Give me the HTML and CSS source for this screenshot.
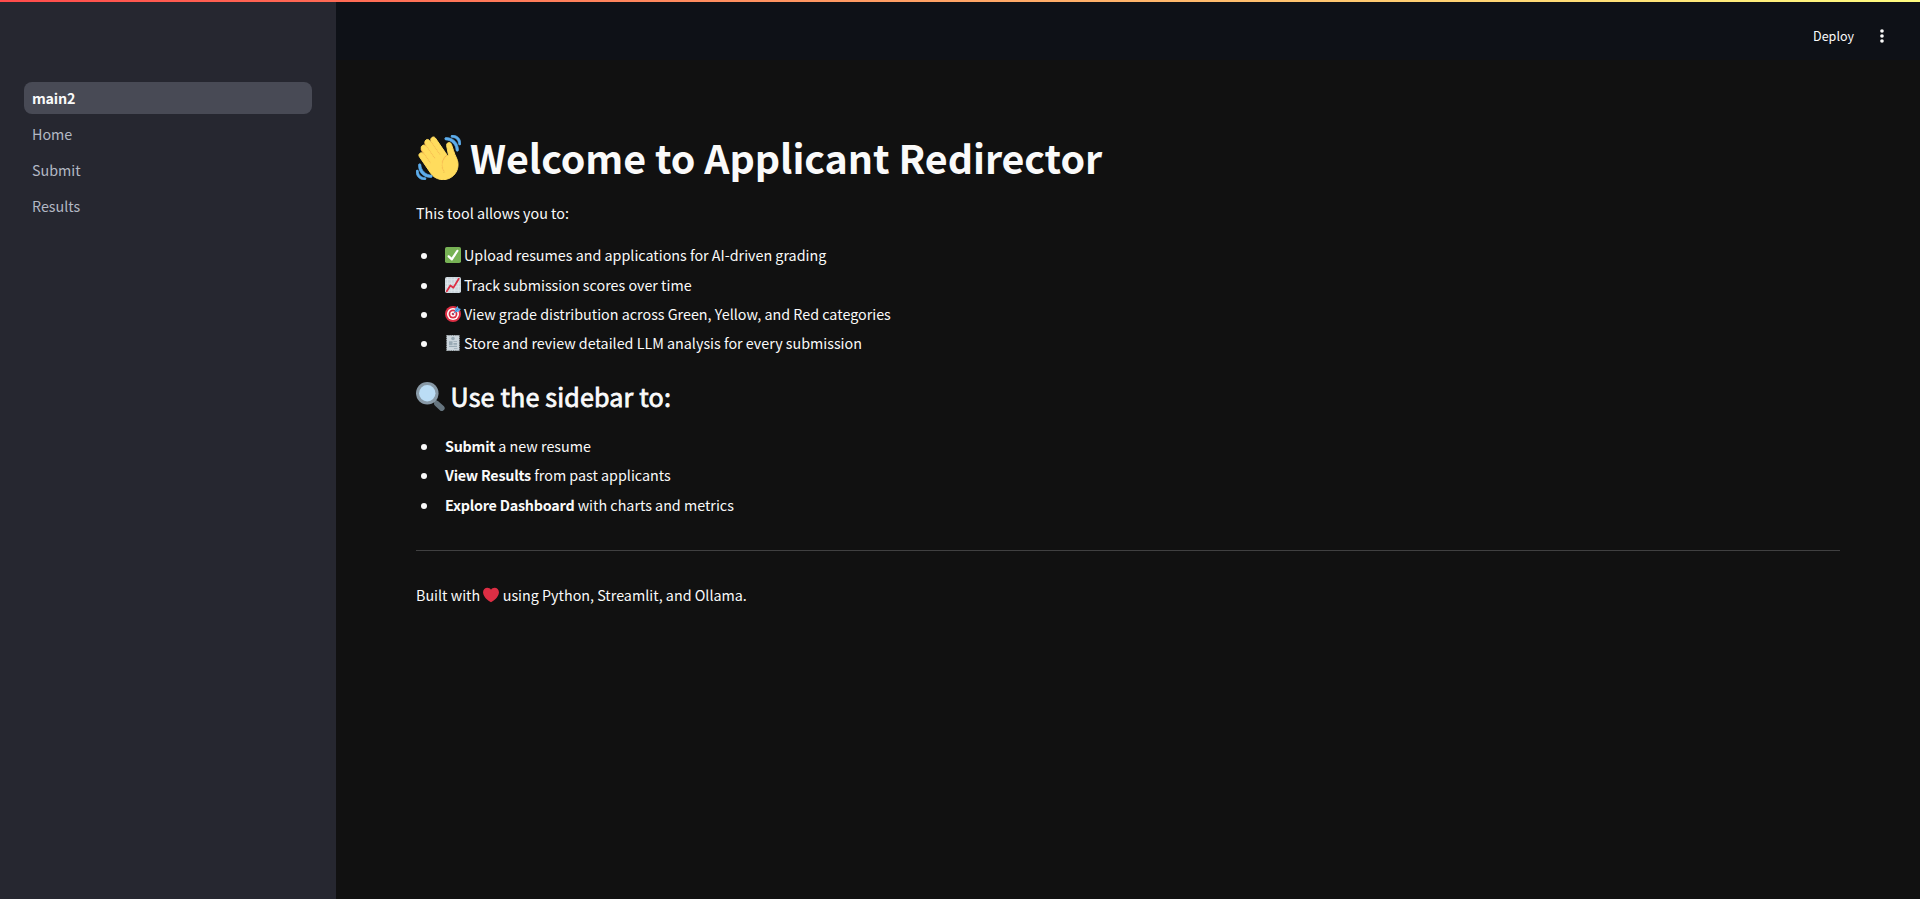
FILE: index.html
```html
<!DOCTYPE html>
<html lang="en">
<head>
<meta charset="utf-8">
<title>main2</title>
<link rel="stylesheet" href="styles.css">
</head>
<body>
<div class="decoration"></div>
<div class="app">
  <nav class="sidebar">
    <a class="nav-link active">main2</a>
    <a class="nav-link">Home</a>
    <a class="nav-link">Submit</a>
    <a class="nav-link">Results</a>
  </nav>
  <div class="main">
    <header class="toolbar">
      <span class="deploy">Deploy</span>
      <svg class="menu" viewBox="0 0 24 24"><circle cx="12" cy="6" r="2.200"/><circle cx="12" cy="12" r="2.200"/><circle cx="12" cy="18" r="2.200"/></svg>
    </header>
    <main class="content">
      <h1 class="title">
        <svg class="emoji-xl" viewBox="0 0 36 36"><path fill="#F5B04E" d="M4.861 9.147c.94-.657 2.357-.531 3.201.166l-.968-1.407c-.779-1.111-.5-2.313.612-3.093 1.112-.777 4.263 1.312 4.263 1.312-.786-1.122-.639-2.544.483-3.331 1.122-.784 2.67-.514 3.456.611l10.292 14.524L25 31l-12.083-4.042L4.156 12.594c-.785-1.126-.417-2.66.705-3.447z"/><path fill="#FFDC5D" stroke="#FFDC5D" stroke-width=".8" d="M2.695 17.336s-1.132-1.65.519-2.781c1.649-1.131 2.78.518 2.78.518l5.251 7.658c.181-.302.379-.6.6-.894L4.557 11.21s-1.131-1.649.519-2.78c1.649-1.131 2.78.518 2.78.518l6.855 9.997c.255-.208.516-.417.785-.622L7.549 6.732s-1.131-1.649.519-2.78c1.649-1.131 2.78.518 2.78.518l7.947 11.589c.292-.179.581-.334.871-.498L12.238 4.729s-1.131-1.649.518-2.78c1.649-1.131 2.78.518 2.78.518l7.854 11.454 1.194 1.742c-4.948 3.394-5.419 9.779-2.592 13.902.565.825 1.39.26 1.39.26-3.393-4.949-2.357-10.51 2.592-13.903L24.515 8.62s-.545-1.924 1.378-2.47c1.924-.545 2.47 1.379 2.47 1.379l1.685 5.004c.668 1.984 1.379 3.961 2.32 5.831 2.657 5.28 1.07 11.842-3.94 15.279-5.465 3.747-12.936 2.354-16.684-3.11L2.695 17.336z"/><g fill="#5DADEC" stroke="#5DADEC" stroke-width=".5"><path d="M12 32.042C8 32.042 3.958 28 3.958 24c0-.553-.405-1-.958-1s-1.042.447-1.042 1C1.958 30 6 34.042 12 34.042c.553 0 1-.489 1-1.042s-.447-.958-1-.958z"/><path d="M7 34c-3 0-5-2-5-5 0-.553-.447-1-1-1s-1 .447-1 1c0 4 3 7 7 7 .553 0 1-.447 1-1s-.447-1-1-1zM24 2c-.552 0-1 .448-1 1s.448 1 1 1c4 0 8 3.589 8 8 0 .552.448 1 1 1s1-.448 1-1c0-5.514-4-10-10-10z"/><path d="M29 .042c-.552 0-1 .406-1 .958s.448 1.042 1 1.042c3 0 4.958 2.225 4.958 4.958 0 .552.489 1 1.042 1s.958-.448.958-1C35.958 3.163 33 .042 29 .042z"/></g></svg>
        <span>Welcome to Applicant Redirector</span>
      </h1>
      <p class="intro">This tool allows you to:</p>
      <ul class="list features">
        <li><svg class="emoji" viewBox="0 0 36 36"><rect width="36" height="36" rx="4" fill="#77B255"/><path fill="#FFF" d="M29.28 6.362c-1.156-.751-2.704-.422-3.458.736L14.936 23.877l-5.029-4.65c-1.014-.938-2.596-.875-3.533.138-.937 1.014-.875 2.596.139 3.533l7.209 6.666c.48.445 1.09.665 1.696.665.673 0 1.534-.282 2.099-1.139.332-.506 12.5-19.27 12.5-19.27.751-1.159.421-2.707-.737-3.458z"/></svg><span>Upload resumes and applications for AI-driven grading</span></li>
        <li class="spaced"><svg class="emoji" viewBox="0 0 36 36"><rect width="36" height="36" rx="4" fill="#CCD6DD"/><path stroke="#E1E8ED" stroke-width="2" d="M1 6h34M1 14h34M1 22h34M1 30h34M6 1v34M14 1v34M22 1v34M30 1v34"/><path fill="none" stroke="#DD2E44" stroke-width="4" stroke-linecap="round" stroke-linejoin="round" d="M4 32l8-13 7 5L31 4"/></svg><span>Track submission scores over time</span></li>
        <li><svg class="emoji" viewBox="0 0 36 36"><circle cx="18" cy="18" r="18" fill="#DD2E44"/><circle cx="18" cy="18" r="13.5" fill="#FFF"/><circle cx="18" cy="18" r="10" fill="#DD2E44"/><circle cx="18" cy="18" r="6" fill="#FFF"/><circle cx="18" cy="18" r="3" fill="#DD2E44"/><path fill="#55ACEE" d="M22 12l1-6 6-6 1 5 6 2-6 6-6 1z"/><path stroke="#3A87C2" stroke-width="2" d="M17 19L30 6"/></svg><span>View grade distribution across Green, Yellow, and Red categories</span></li>
        <li><svg class="emoji" viewBox="0 0 36 36"><rect x="4" y="1" width="28" height="34" fill="#CCD6DD"/><path stroke="#CCD6DD" stroke-width="2" stroke-dasharray="2 2" d="M4 1h28M4 35h28M4 1v34M32 1v34"/><g fill="#99AAB5"><circle cx="18" cy="8" r="4"/><path d="M9 14h8v9H9zM19 14h8v2h-8zM19 18h8v2h-8zM19 21h8v2h-8zM9 25h18v2H9zM20 29h8v2h-8z"/></g></svg><span>Store and review detailed LLM analysis for every submission</span></li>
      </ul>
      <h2 class="subtitle">
        <svg class="emoji-lg" viewBox="0 0 36 36"><path stroke="#66757F" stroke-width="4" d="M21 21l6 6"/><path stroke="#66757F" stroke-width="7" stroke-linecap="round" d="M26 27l6 5.500"/><circle cx="14" cy="14" r="14" fill="#8899A6"/><circle cx="14" cy="14" r="10.200" fill="#BBDDF5"/></svg>
        <span class="subtitle-text">Use the sidebar to:</span>
      </h2>
      <ul class="list actions">
        <li><span><b>Submit</b> a new resume</span></li>
        <li><span><b>View Results</b> from past applicants</span></li>
        <li class="spaced"><span><b>Explore Dashboard</b> with charts and metrics</span></li>
      </ul>
      <hr class="divider">
      <p class="footer"><span>Built with</span><svg class="heart" viewBox="0 0 36 36"><path fill="#DD2E44" d="M35.885 11.833c0-5.45-4.418-9.868-9.867-9.868-3.308 0-6.227 1.633-8.018 4.129-1.791-2.496-4.71-4.129-8.017-4.129-5.45 0-9.868 4.417-9.868 9.868 0 .772.098 1.52.266 2.241C1.751 22.587 11.216 31.568 18 34.034c6.783-2.466 16.249-11.447 17.617-19.959.17-.721.268-1.469.268-2.242z"/></svg><span>using Python, Streamlit, and Ollama.</span></p>
    </main>
  </div>
</div>
</body>
</html>
```

FILE: styles.css
```css
* { box-sizing: border-box; }
body {
  margin: 0;
  height: 899px;
  overflow: hidden;
  display: flex;
  flex-direction: column;
  background: #111;
  color: #fafafa;
  font-family: "Noto Sans CJK SC", "Noto Sans", sans-serif;
  font-size: 14.32px;
  line-height: 26px;
}
svg { display: block; flex: none; }
.decoration { height: 2px; flex: none; background: linear-gradient(90deg, #ff4b4b, #fffd80); }
.app { flex: 1; display: flex; }
.sidebar {
  width: 336px;
  flex: none;
  display: flex;
  flex-direction: column;
  gap: 4px;
  padding: 80px 24px 0;
  background: #262730;
}
.nav-link { height: 32px; padding: 0 8px; line-height: 32px; border-radius: 8px; color: #b3b8c4; }
.active { background: #484a55; color: #fafafa; font-weight: 600; letter-spacing: -0.22px; }
.main { flex: 1; display: flex; flex-direction: column; }
.toolbar {
  height: 58px;
  flex: none;
  display: flex;
  align-items: center;
  justify-content: flex-end;
  gap: 18px;
  padding: 10px 28px 0 0;
  background: #0e1117;
  font-size: 12.53px;
}
.menu { width: 20px; height: 20px; margin-bottom: 1px; fill: #fafafa; }
.content { padding: 64px 80px 0; }
.title, .subtitle, .intro, .footer, .list { margin: 0; }
.title { display: flex; align-items: center; gap: 9px; height: 66px; font-size: 39.4px; line-height: 66px; font-weight: 700; letter-spacing: -0.05px; }
.emoji-xl { width: 45px; height: 45px; }
.intro { padding-top: 10px; }
.list { list-style: none; padding: 0; display: flex; flex-direction: column; }
.features { margin-top: 15px; }
.actions { margin-top: 17px; }
.list li { display: flex; align-items: center; height: 29px; padding-bottom: 1px; }
.list .spaced { margin-top: 1px; }
.list li::before { content: ""; width: 6px; height: 6px; margin: 2px 18px 0 5px; border-radius: 50%; background: #fafafa; }
.list b { font-weight: 600; letter-spacing: -0.22px; }
.emoji { width: 16px; height: 16px; margin-right: 3px; }
.subtitle { display: flex; align-items: flex-start; gap: 5px; height: 36px; margin-top: 21px; padding-top: 3px; font-size: 25.07px; line-height: 28px; font-weight: 400; }
.subtitle-text { margin-left: 0.5px; letter-spacing: 0.18px; -webkit-text-stroke: 0.8px #fafafa; }
.emoji-lg { width: 29px; height: 29px; }
.divider { height: 1px; border: 0; margin: 30px 0 31px; background: #404041; }
.footer { display: flex; align-items: center; gap: 3px; }
.heart { width: 16px; height: 16px; margin-right: 0.5px; }
```
